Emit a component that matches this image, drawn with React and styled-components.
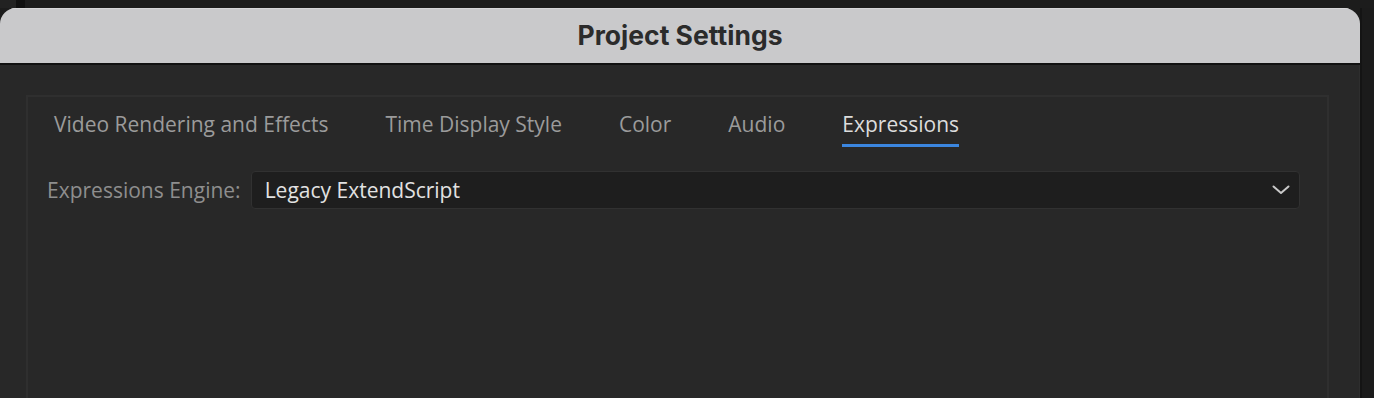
import React, { useState } from 'react'
import styled, { createGlobalStyle } from 'styled-components'

const GlobalStyle = createGlobalStyle`
    html, body {
        margin: 0;
        padding: 0;
        background: #1c1c1c;
        overflow: hidden;
    }
    * {
        box-sizing: border-box;
    }
`

const tabs = ['Video Rendering and Effects', 'Time Display Style', 'Color', 'Audio', 'Expressions']

const App = () => {
    const [active, setActive] = useState('Expressions')
    return (
        <Page>
            <GlobalStyle />
            <TopStrip />
            <Row>
                <Dialog>
                    <TitleBar>
                        <Title>Project Settings</Title>
                    </TitleBar>
                    <Body>
                        <Panel>
                            <TabBar>
                                {tabs.map((t) => (
                                    <Tab key={t} $active={t === active} onClick={() => setActive(t)}>
                                        {t}
                                    </Tab>
                                ))}
                            </TabBar>
                            <Field>
                                <Label>Expressions Engine:</Label>
                                <Select>
                                    <span>Legacy ExtendScript</span>
                                    <svg width="18" height="10" viewBox="0 0 18 10" fill="none">
                                        <path d="M1.5 1.5 L9 8 L16.5 1.5" stroke="#c9c9c9" strokeWidth="2" strokeLinecap="round" strokeLinejoin="round" />
                                    </svg>
                                </Select>
                            </Field>
                        </Panel>
                    </Body>
                </Dialog>
                <Gutter />
            </Row>
        </Page>
    )
}

//Styles
const Page = styled.div`
    width: 1374px;
    height: 398px;
    display: flex;
    flex-direction: column;
    background: #1c1c1c;
    overflow: hidden;
`
const TopStrip = styled.div`
    height: 8px;
    flex: none;
    background: linear-gradient(to right, #222 0 16px, #101010 16px 25px, #1c1c1c 25px);
`
const Row = styled.div`
    flex: 1;
    display: flex;
    min-height: 0;
`
const Gutter = styled.div`
    flex: 1;
    background: #1b1b1b;
    border-left: 2px solid #141414;
`
const Dialog = styled.section`
    width: 1360px;
    flex: none;
    display: flex;
    flex-direction: column;
    border-radius: 16px 16px 0 0;
    overflow: hidden;
    background: #282828;
`
const TitleBar = styled.header`
    height: 57px;
    flex: none;
    display: flex;
    align-items: center;
    justify-content: center;
    padding-bottom: 3px;
    background: #c9c9cb;
    border-top: 1px solid #d6d6d8;
    border-bottom: 2px solid #111;
`
const Title = styled.h1`
    margin: 0;
    font-family: Inter, "Noto Sans", sans-serif;
    font-weight: 700;
    font-size: 26.5px;
    color: #2b2b2b;
`
const Body = styled.div`
    flex: 1;
    padding: 30px 30px 0 26px;
    border-right: 1px solid #2e2e2e;
`
const Panel = styled.div`
    height: 100%;
    border: 2px solid #2f2f2f;
    border-bottom: none;
    background: #282828;
    padding: 8px 27px 0 19px;
`
const TabBar = styled.nav`
    display: flex;
    gap: 57px;
    padding-left: 7px;
    height: 66px;
`
const Tab = styled.div`
    font-family: "Open Sans", "Noto Sans", sans-serif;
    font-size: 21px;
    line-height: 28px;
    padding-top: 5px;
    height: 42px;
    color: ${(p) => (p.$active ? '#dcdcdc' : '#9b9b9b')};
    border-bottom: 3px solid ${(p) => (p.$active ? '#3b86df' : 'transparent')};
    cursor: pointer;
    white-space: nowrap;
`
const Field = styled.div`
    display: flex;
    align-items: center;
    gap: 10px;
`
const Label = styled.label`
    font-family: "Open Sans", "Noto Sans", sans-serif;
    font-size: 21px;
    color: #8e8e8e;
    white-space: nowrap;
`
const Select = styled.div`
    flex: 1;
    height: 38px;
    display: flex;
    align-items: center;
    justify-content: space-between;
    padding: 0 9px 0 13px;
    background: #1e1e1e;
    border: 1px solid #313131;
    border-radius: 4px;
    font-family: "Open Sans", "Noto Sans", sans-serif;
    font-size: 21px;
    color: #e2e2e2;
`
//------Styles
export default App
